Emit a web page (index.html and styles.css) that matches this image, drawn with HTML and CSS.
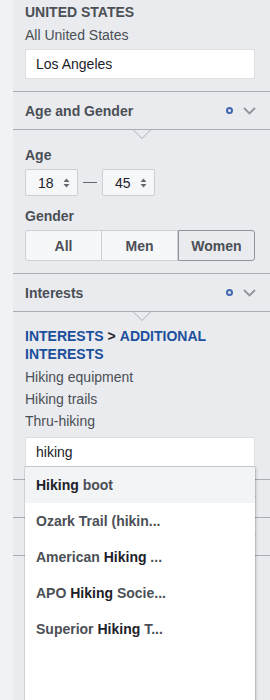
FILE: index.html
```html
<!DOCTYPE html>
<html lang="en">
<head>
<meta charset="utf-8">
<link rel="stylesheet" href="styles.css">
</head>
<body>
<div class="panel">
  <section class="sec loc">
    <div class="cap">UNITED STATES</div>
    <div class="sub">All United States</div>
    <div class="field">Los Angeles</div>
  </section>

  <div class="head">
    <span class="title">Age and Gender</span>
    <span class="icons">
      <span class="ring"></span>
      <svg class="chev" width="13" height="8" viewBox="0 0 13 8"><polyline points="1,1 6.5,6.5 12,1" fill="none" stroke="#90949c" stroke-width="1.8"/></svg>
    </span>
    <svg class="notch" width="20" height="10" viewBox="0 0 20 10"><polyline points="0.5,0 10,9.5 19.5,0" fill="none" stroke="#a9adb4" stroke-width="1"/></svg>
  </div>

  <section class="sec age">
    <div class="label">Age</div>
    <div class="ages">
      <div class="sel"><span>18</span><svg width="7" height="10" viewBox="0 0 7 10"><path d="M3.5 0.5 L6.5 4 H0.5 Z M3.5 9.5 L6.5 6 H0.5 Z" fill="#606770"/></svg></div>
      <span class="dash"></span>
      <div class="sel"><span>45</span><svg width="7" height="10" viewBox="0 0 7 10"><path d="M3.5 0.5 L6.5 4 H0.5 Z M3.5 9.5 L6.5 6 H0.5 Z" fill="#606770"/></svg></div>
    </div>
    <div class="label gap">Gender</div>
    <div class="seg">
      <div class="btn">All</div>
      <div class="btn">Men</div>
      <div class="btn on">Women</div>
    </div>
  </section>

  <div class="head">
    <span class="title">Interests</span>
    <span class="icons">
      <span class="ring"></span>
      <svg class="chev" width="13" height="8" viewBox="0 0 13 8"><polyline points="1,1 6.5,6.5 12,1" fill="none" stroke="#90949c" stroke-width="1.8"/></svg>
    </span>
    <svg class="notch" width="20" height="10" viewBox="0 0 20 10"><polyline points="0.5,0 10,9.5 19.5,0" fill="none" stroke="#a9adb4" stroke-width="1"/></svg>
  </div>

  <section class="sec interests">
    <div class="crumb">
      <div class="crumb-line"><span class="blue">INTERESTS</span><span class="sep">&gt;</span><span class="blue">ADDITIONAL</span></div>
      <div class="crumb-line"><span class="blue">INTERESTS</span></div>
    </div>
    <ul class="list">
      <li>Hiking equipment</li>
      <li>Hiking trails</li>
      <li>Thru-hiking</li>
    </ul>
    <div class="search">
      <div class="field">hiking</div>
      <ul class="drop">
        <li class="hl"><b>Hiking</b> boot</li>
        <li>Ozark Trail (hikin...</li>
        <li>American <b>Hiking</b> ...</li>
        <li>APO <b>Hiking</b> Socie...</li>
        <li>Superior <b>Hiking</b> T...</li>
      </ul>
    </div>
  </section>

  <div class="head">
    <span class="title"></span>
    <span class="icons">
      <span class="ring"></span>
      <svg class="chev" width="13" height="8" viewBox="0 0 13 8"><polyline points="1,1 6.5,6.5 12,1" fill="none" stroke="#90949c" stroke-width="1.8"/></svg>
    </span>
  </div>
  <div class="head">
    <span class="title"></span>
    <span class="icons">
      <span class="ring"></span>
      <svg class="chev" width="13" height="8" viewBox="0 0 13 8"><polyline points="1,1 6.5,6.5 12,1" fill="none" stroke="#90949c" stroke-width="1.8"/></svg>
    </span>
  </div>
</div>
</body>
</html>
```

FILE: styles.css
```css
html, body {
  margin: 0;
  padding: 0;
}
body {
  background: #f1f2f4;
  font-family: "Liberation Sans", Arial, sans-serif;
  font-size: 14px;
  line-height: 18px;
  color: #4b4f56;
  height: 700px;
  overflow: hidden;
}
.panel {
  margin-left: 13px;
  background: #e9ebee;
  min-height: 700px;
}
.sec {
  padding: 3px 15px 12px 12px;
  border-bottom: 1px solid #a9adb4;
}
.cap {
  font-weight: bold;
  color: #4b4f56;
}
.sub {
  margin-top: 5px;
}
.field {
  box-sizing: border-box;
  margin-top: 5px;
  height: 30px;
  background: #fff;
  border: 1px solid #dddfe2;
  padding-left: 10px;
  line-height: 28px;
  color: #1d2129;
}
.head {
  position: relative;
  display: flex;
  align-items: center;
  justify-content: space-between;
  height: 37px;
  padding: 0 14px 0 12px;
  border-bottom: 1px solid #a9adb4;
}
.title {
  font-weight: bold;
  color: #4b4f56;
}
.icons {
  display: flex;
  align-items: center;
  gap: 10px;
}
.ring {
  box-sizing: border-box;
  width: 7px;
  height: 7px;
  border: 2px solid #4267b2;
  border-radius: 50%;
}
.chev {
  display: block;
}
.notch {
  position: absolute;
  left: 50%;
  margin-left: -10px;
  top: 37px;
}
.age {
  padding-top: 16px;
}
.label {
  font-weight: bold;
  color: #4b4f56;
}
.label.gap {
  margin-top: 11px;
}
.ages {
  display: flex;
  align-items: center;
  margin-top: 5px;
}
.sel {
  box-sizing: border-box;
  width: 53px;
  height: 27px;
  background: #f6f7f9;
  border: 1px solid #ccd0d5;
  border-radius: 2px;
  display: flex;
  align-items: center;
  padding-left: 12px;
  gap: 9px;
  color: #1d2129;
}
.sel svg {
  display: block;
}
.dash {
  width: 14px;
  height: 1px;
  background: #606770;
  margin: 0 5px;
}
.seg {
  display: flex;
  margin-top: 5px;
  height: 31px;
}
.btn {
  box-sizing: border-box;
  flex: 1;
  display: flex;
  align-items: center;
  justify-content: center;
  background: #f6f7f9;
  border: 1px solid #ccd0d5;
  font-weight: bold;
  color: #4b4f56;
}
.btn:first-child {
  border-radius: 3px 0 0 3px;
}
.btn + .btn {
  border-left: none;
}
.btn.on {
  background: #e9ebee;
  border: 1px solid #8d949e;
  border-radius: 0 3px 3px 0;
}
.interests {
  padding-top: 15px;
}
.crumb {
  font-weight: bold;
  color: #1d2129;
}
.crumb-line {
  display: flex;
}
.sep {
  margin: 0 4px;
}
.blue {
  color: #1c4f9c;
}
.list {
  list-style: none;
  margin: 3px 0 0;
  padding: 0;
}
.list li {
  line-height: 22px;
}
.search {
  position: relative;
}
.drop {
  position: absolute;
  z-index: 5;
  top: 100%;
  left: 0;
  right: 0;
  height: 250px;
  margin: 0;
  padding: 0;
  list-style: none;
  background: #fff;
  box-shadow: 0 0 0 1px rgba(0, 0, 0, 0.08), 1px 1px 3px rgba(0, 0, 0, 0.2);
}
.drop li {
  height: 36px;
  line-height: 36px;
  padding-left: 11px;
  font-weight: bold;
  color: #4b4f56;
}
.drop li b {
  color: #1d2129;
}
.drop li.hl {
  background: #f3f4f6;
}
```
